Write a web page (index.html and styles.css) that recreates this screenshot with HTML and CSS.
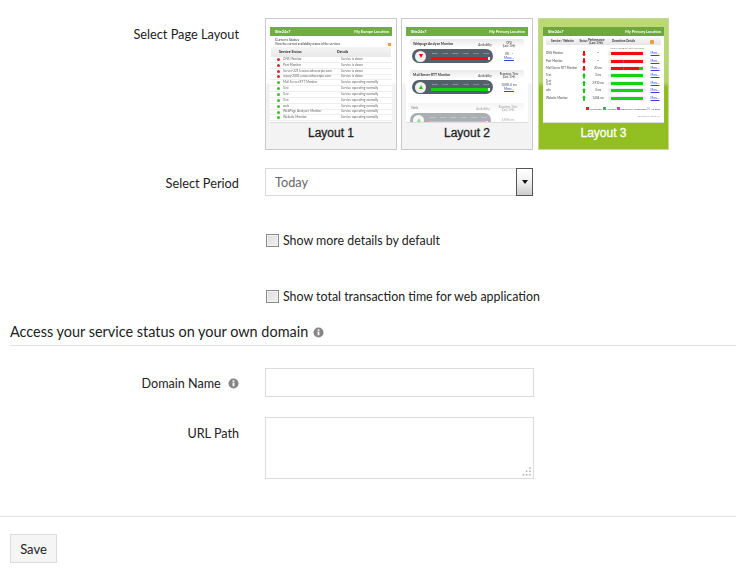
FILE: index.html
```html
<!DOCTYPE html>
<html lang="en">
<head>
<meta charset="utf-8">
<title>Status page settings</title>
<link rel="stylesheet" href="styles.css">
</head>
<body>
<form class="page">
  <div class="row row-layout">
    <div class="label label-layout">Select Page Layout</div>
    <div class="cards">
      <div class="card">
        <div class="thumb">
          <div class="bar"><span><b>Site</b>24x7</span><span>My Europe Location</span></div>
          <div class="t1-head"><div class="t1-title">Current Status</div><div class="t1-sub">View the current availability status of the services</div><i class="t-rss"></i></div>
          <div class="t1-cols"><span>Service Status</span><span>Details</span></div>
          <div class="t1-row"><i class="dot red"></i><span>DNS Monitor</span><span>Service is down</span></div>
          <div class="t1-row"><i class="dot red"></i><span>Port Monitor</span><span>Service is down</span></div>
          <div class="t1-row"><i class="dot red"></i><span>Server-2215.vawo.zohocorpin.com</span><span>Service is down</span></div>
          <div class="t1-row"><i class="dot red"></i><span>vcpay-2001.vawo.zohocorpin.com</span><span>Service is down</span></div>
          <div class="t1-row"><i class="dot green"></i><span>Mail Server RTT Monitor</span><span>Service operating normally</span></div>
          <div class="t1-row"><i class="dot green"></i><span>Test</span><span>Service operating normally</span></div>
          <div class="t1-row"><i class="dot green"></i><span>Test</span><span>Service operating normally</span></div>
          <div class="t1-row"><i class="dot green"></i><span>Test</span><span>Service operating normally</span></div>
          <div class="t1-row"><i class="dot green"></i><span>web</span><span>Service operating normally</span></div>
          <div class="t1-row"><i class="dot green"></i><span>WebPage Analyzer Monitor</span><span>Service operating normally</span></div>
          <div class="t1-row"><i class="dot green"></i><span>Website Monitor</span><span>Service operating normally</span></div>
        </div>
        <div class="caption">Layout 1</div>
      </div>

      <div class="card">
        <div class="thumb">
          <div class="bar"><span><b>Site</b>24x7</span><span>My Primary Location</span></div>
          <div class="t2-block">
            <div class="t2-top"><strong>Webpage Analyze Monitor</strong><span>Availability</span><span class="t2-metric">CPU<br>(Last 1 Hr)</span></div>
            <div class="t2-body">
              <div class="t2-pill"><i class="t2-disc"><i class="arrow-down"></i></i><div class="t2-track"><div class="t2-ticks"><span>00:00</span><span>04:00</span><span>08:00</span><span>12:00</span><span>16:00</span><span>20:00</span></div><div class="t2-fill fill-red"></div></div></div>
              <div class="t2-val">0% &nbsp; -<br><u>More...</u></div>
            </div>
          </div>
          <div class="t2-block">
            <div class="t2-top"><strong>Mail Server RTT Monitor</strong><span>Availability</span><span class="t2-metric">Response Time<br>(Last 1 Hr)</span></div>
            <div class="t2-body">
              <div class="t2-pill"><i class="t2-disc"><i class="arrow-up"></i></i><div class="t2-track"><div class="t2-ticks"><span>00:00</span><span>04:00</span><span>08:00</span><span>12:00</span><span>16:00</span><span>20:00</span></div><div class="t2-fill fill-green"></div></div></div>
              <div class="t2-val">100% 0 ms<br><u>More...</u></div>
            </div>
          </div>
          <div class="t2-block t2-fade">
            <div class="t2-top"><strong>Web</strong><span>Availability</span><span class="t2-metric">Response Time<br>(Last 1 Hr)</span></div>
            <div class="t2-body">
              <div class="t2-pill"><i class="t2-disc"><i class="arrow-up"></i></i><div class="t2-track"><div class="t2-ticks"><span>00:00</span><span>04:00</span><span>08:00</span><span>12:00</span><span>16:00</span><span>20:00</span></div><div class="t2-fill fill-green"></div></div></div>
              <div class="t2-val">3,894 ms</div>
            </div>
          </div>
        </div>
        <div class="caption">Layout 2</div>
      </div>

      <div class="card card-active">
        <div class="thumb">
          <div class="bar bar-active"><span><b>Site</b>24x7</span><span>My Primary Location</span></div>
          <div class="t3-head"><span>Service / Website</span><span>Status</span><span>Performance<br>(Last 1 Hr)</span><span>Downtime Details</span><i class="t-rss"></i></div>
          <div class="t3-hours">00:00 04:00 08:00 12:00 16:00 20:00</div>
          <div class="t3-row"><span>DNS Monitor</span><i class="t3-arrow t3-down"></i><span>--</span><div class="t3-bar"><i class="fill-red"></i></div><u>More...</u></div>
          <div class="t3-row"><span>Port Monitor</span><i class="t3-arrow t3-down"></i><span>--</span><div class="t3-bar"><i class="fill-port"></i></div><u>More...</u></div>
          <div class="t3-row"><span>Mail Server RTT Monitor</span><i class="t3-arrow t3-down"></i><span>20 ms</span><div class="t3-bar"><i class="fill-mix"></i></div><u>More...</u></div>
          <div class="t3-row"><span>Test</span><i class="t3-arrow t3-up"></i><span>3 ms</span><div class="t3-bar"><i class="fill-green"></i></div><u>More...</u></div>
          <div class="t3-row"><span class="t3-two">Test<br>Test</span><i class="t3-arrow t3-up"></i><span>2,910 ms</span><div class="t3-bar"><i class="fill-green"></i></div><u>More...</u></div>
          <div class="t3-row"><span>cdn</span><i class="t3-arrow t3-up"></i><span>3 ms</span><div class="t3-bar"><i class="fill-green"></i></div><u>More...</u></div>
          <div class="t3-row"><span>Website Monitor</span><i class="t3-arrow t3-up"></i><span>1,004 ms</span><div class="t3-bar"><i class="fill-green"></i></div><u>More...</u></div>
          <div class="t3-legend"><i class="key red"></i> Unavailable <i class="key green"></i> Available <i class="key pink"></i> Scheduled Maintenance <i class="key grey"></i> No Data</div>
          <div class="t3-powered">Powered by Site24x7</div>
        </div>
        <div class="caption">Layout 3</div>
      </div>
    </div>
  </div>

  <div class="row row-period">
    <label class="label label-period" for="period">Select Period</label>
    <div class="select-wrap">
      <select id="period" class="select"><option>Today</option></select>
      <span class="select-btn"><i class="caret"></i></span>
    </div>
  </div>

  <div class="row row-check">
    <div class="label"></div>
    <label class="check"><input type="checkbox"><span>Show more details by default</span></label>
  </div>
  <div class="row row-check row-check2">
    <div class="label"></div>
    <label class="check"><input type="checkbox"><span>Show total transaction time for web application</span></label>
  </div>

  <h2 class="section">Access your service status on your own domain
    <svg class="info" viewBox="0 0 12 12"><circle cx="6" cy="6" r="5.5"/><rect x="5" y="5" width="2" height="4" fill="#fff"/><rect x="5" y="2.6" width="2" height="1.6" fill="#fff"/></svg>
  </h2>

  <div class="row row-domain">
    <label class="label label-domain" for="domain">Domain Name <svg class="info info-label" viewBox="0 0 12 12"><circle cx="6" cy="6" r="5.5"/><rect x="5" y="5" width="2" height="4" fill="#fff"/><rect x="5" y="2.6" width="2" height="1.6" fill="#fff"/></svg></label>
    <input id="domain" class="input" type="text">
  </div>

  <div class="row row-url">
    <label class="label label-url" for="url">URL Path</label>
    <div class="textarea-wrap">
      <textarea id="url" class="textarea"></textarea>
      <svg class="grip" viewBox="0 0 10 10"><rect x="7.2" y="0.3" width="1.5" height="1.5"/><rect x="7.2" y="3.6" width="1.5" height="1.5"/><rect x="3.9" y="3.6" width="1.5" height="1.5"/><rect x="0.6" y="7" width="1.5" height="1.5"/><rect x="3.9" y="7" width="1.5" height="1.5"/><rect x="7.2" y="7" width="1.5" height="1.5"/></svg>
    </div>
  </div>

  <div class="footer"><button type="button" class="save">Save</button></div>
</form>
</body>
</html>
```

FILE: styles.css
```css
* { box-sizing: border-box; }
html, body { margin: 0; padding: 0; background: #fff; }
body { font-family: Lato, "Open Sans", sans-serif; font-size: 13px; color: #222; overflow: hidden; height: 570px; }
.page { width: 736px; padding-top: 18px; }
.row { display: grid; grid-template-columns: 239px auto; column-gap: 26px; justify-content: start; }
.label { text-align: right; font-size: 12.75px; color: #222; }
.label-layout { padding-top: 8px; }
.label-period { padding-top: 2px; }
.label-domain { padding-top: 2px; font-size: 12.6px; }

.cards { display: flex; gap: 4px; }
.card { width: 132px; height: 132px; border: 1px solid #c9c9c9; background: linear-gradient(#fff 0, #fff 63px, #f3f3f3 66px, #f3f3f3 100%); padding: 8px 4px 0; }
.card-active { width: 131px; margin-left: 1px; border-color: #c4d99a; background: linear-gradient(#bcd977 0, #b5d569 63px, #8fbd1d 68px, #93bf22 100%); }
.thumb { height: 96px; background: #fff; overflow: hidden; font-size: 3.4px; color: #666; border-bottom: 1px solid #ddd; line-height: 1; filter: blur(.3px); }
.caption { text-align: center; font: 12px/16px "Liberation Sans", Arial, sans-serif; -webkit-text-stroke: .3px currentColor; color: #222; margin-top: 2px; }
.card-active .caption { color: #fff; }

.bar { height: 9px; background: #6fae3f; color: #fff; display: flex; justify-content: space-between; align-items: center; padding: 0 3px 0 5px; font-weight: 700; font-size: 3.9px; }
.bar b { color: #fff; }
.bar-active { background: #6fa83a; }

.t1-head { position: relative; padding: 2px 5px 0; color: #333; height: 11px; }
.t1-title { font-size: 3.8px; line-height: 4px; }
.t1-sub { font-size: 3px; line-height: 4px; }
.t-rss { position: absolute; right: 1px; top: 7px; width: 3px; height: 3px; background: #ef9b3f; }
.t1-cols { display: grid; grid-template-columns: 58px 1fr; height: 10px; margin: 0 1px; padding-left: 8px; align-items: center; background: linear-gradient(#f4f4f4, #e9e9e9); color: #222; font-weight: 700; font-size: 3.6px; }
.t1-row { display: grid; grid-template-columns: 4px 56px 1fr; height: 5.85px; padding-left: 7px; column-gap: 2px; align-items: center; border-bottom: 1px solid #eee; color: #666; font-size: 3.2px; white-space: nowrap; }
.dot { width: 3px; height: 3px; display: block; border-radius: 50%; }
.red { background: #d8262c; }
.green { background: #43b82f; }
.pink { background: #ee22ee; }
.grey { background: #ddd; }

.t2-block { margin: 3px 4px; padding: 2px 2px 0; height: 28px; border-radius: 2px; background: linear-gradient(#e9e9e9, #fff 9px); }
.t2-top { display: grid; grid-template-columns: 62px 22px 1fr; align-items: center; height: 8px; color: #333; font-size: 2.8px; text-align: center; }
.t2-top strong { font-size: 3.4px; text-align: left; padding-left: 1px; }
.t2-body { display: flex; gap: 3px; align-items: center; }
.t2-pill { display: flex; align-items: center; width: 81px; height: 14px; border-radius: 7px; background: #55616a; padding-left: 3px; gap: 5px; flex: none; }
.t2-disc { width: 11px; height: 11px; border-radius: 50%; background: #f2f2f2; flex: none; position: relative; display: flex; align-items: center; justify-content: center; }
.arrow-down { width: 0; height: 0; border: 2.5px solid transparent; border-top: 4px solid #e00; border-bottom: 0; }
.arrow-up { width: 0; height: 0; border: 2.5px solid transparent; border-bottom: 4px solid #26c026; border-top: 0; }
.t2-track { flex: 1; padding-right: 3px; }
.t2-ticks { display: flex; justify-content: space-between; color: #c4cbd0; font-size: 2.2px; height: 5px; padding: 0 1px; }
.t2-fill { height: 3.5px; border-right: 2px solid #eee; }
.fill-red { background: #ef0d0d; }
.fill-green { background: #13d413; }
.t2-val { font-size: 3.2px; text-align: center; line-height: 4.5px; flex: 1; color: #555; white-space: nowrap; }
.t2-val u { color: #3344cc; }
.t2-fade { opacity: .5; margin: 5px 4px 0 2px; }

.t3-head { display: grid; grid-template-columns: 33px 9px 16px 39px 1fr; margin: 2px 3px 0; height: 7px; align-items: center; text-align: center; background: linear-gradient(#f5f5f5, #e6e6e6); font-size: 2.9px; font-weight: 700; color: #333; position: relative; line-height: 3px; }
.t3-head .t-rss { position: static; justify-self: center; width: 4px; height: 4px; border-radius: 1px; }
.t3-hours { text-align: right; padding-right: 20px; height: 5px; padding-top: 1px; font-size: 2px; line-height: 4px; color: #777; }
.t3-row { display: grid; grid-template-columns: 34px 8px 20px 38px 1fr; height: 7.4px; padding-left: 3px; align-items: center; color: #444; font-size: 2.9px; white-space: nowrap; }
.t3-row > span:nth-of-type(2) { text-align: center; }
.t3-two { line-height: 3.7px; }
.t3-arrow { width: 4px; height: 5.5px; display: block; justify-self: center; }
.t3-up { background: #1fc41f; clip-path: polygon(50% 0, 100% 45%, 75% 45%, 75% 100%, 25% 100%, 25% 45%, 0 45%); }
.t3-down { background: #ee1111; clip-path: polygon(25% 0, 75% 0, 75% 55%, 100% 55%, 50% 100%, 0 55%, 25% 55%); }
.t3-bar { height: 5px; border-radius: 3px; background: #eee; padding: 1px 3px; }
.t3-bar i { display: block; height: 3px; }
.fill-mix { background: linear-gradient(90deg, #ef0d0d 0, #ef0d0d 38%, #a06030 38%, #a06030 42%, #ef0d0d 42%, #ef0d0d 86%, #13d413 86%); }
.fill-port { background: linear-gradient(90deg, #ef0d0d 0, #ef0d0d 36%, #c030c0 36%, #c030c0 40%, #ef0d0d 40%); }
.t3-row u { color: #3344cc; text-align: center; }
.t3-legend { text-align: right; padding-right: 4px; margin-top: 5px; font-size: 2.5px; line-height: 4px; color: #444; height: 4px; white-space: nowrap; }
.key { display: inline-block; width: 3px; height: 3px; }
.t3-powered { text-align: right; padding: 5px 4px 0 0; font-size: 2.4px; color: #999; }

.row-period { margin-top: 18px; align-items: center; }
.select-wrap { position: relative; width: 268px; height: 28px; }
.select { appearance: none; width: 100%; height: 100%; border: 1px solid #d9d9d9; background: #fff; border-radius: 0; font: 12.7px Lato, "Open Sans", sans-serif; color: #666; padding: 0 9px; outline: 0; }
.select-btn { position: absolute; right: 0; top: 0; width: 17px; height: 28px; border: 1px solid #555; background: linear-gradient(#fff, #f0f0f0 50%, #ccc); display: flex; align-items: center; justify-content: center; pointer-events: none; }
.caret { width: 0; height: 0; border: 3.5px solid transparent; border-top: 4px solid #111; border-bottom: 0; }

.row-check { margin-top: 36px; height: 16px; }
.row-check2 { margin-top: 40px; }
.check { display: flex; align-items: center; gap: 4px; font-size: 12.4px; color: #222; white-space: nowrap; }
.check input { appearance: none; width: 13px; height: 13px; margin: 0 0 0 1px; border: 1px solid #8b8b8b; background: linear-gradient(135deg, #dcdcdc, #f2f2f2); border-radius: 0; box-shadow: inset 0 0 0 1px #f2f2f2; }

.section { margin: 18px 0 0 10px; padding-bottom: 4px; height: 24px; border-bottom: 1px solid #e2e2e2; font-size: 14.45px; font-weight: 400; line-height: 20px; color: #222; }
.info { width: 11px; height: 11px; fill: #868686; vertical-align: -1px; margin-left: 1px; }
.info-label { margin-left: 4px; }

.row-domain { margin-top: 22px; align-items: center; }
.input { width: 269px; height: 29px; border: 1px solid #dcdcdc; background: #fff; outline: 0; display: block; }
.row-url { margin-top: 20px; }
.label-url { padding-top: 9px; font-size: 12.6px; }
.textarea-wrap { position: relative; width: 269px; height: 62px; }
.textarea { width: 100%; height: 100%; border: 1px solid #dcdcdc; background: #fff; outline: 0; display: block; margin: 0; resize: none; }
.grip { position: absolute; right: 2px; bottom: 2px; width: 10px; height: 10px; fill: #aaa; }

.footer { margin-top: 37px; border-top: 1px solid #e2e2e2; padding: 17px 0 0 10px; }
.save { width: 47px; height: 29px; padding: 0; background: #f5f5f5; border: 1px solid #dcdcdc; border-radius: 0; font: 13px Lato, "Open Sans", sans-serif; color: #222; }
```
